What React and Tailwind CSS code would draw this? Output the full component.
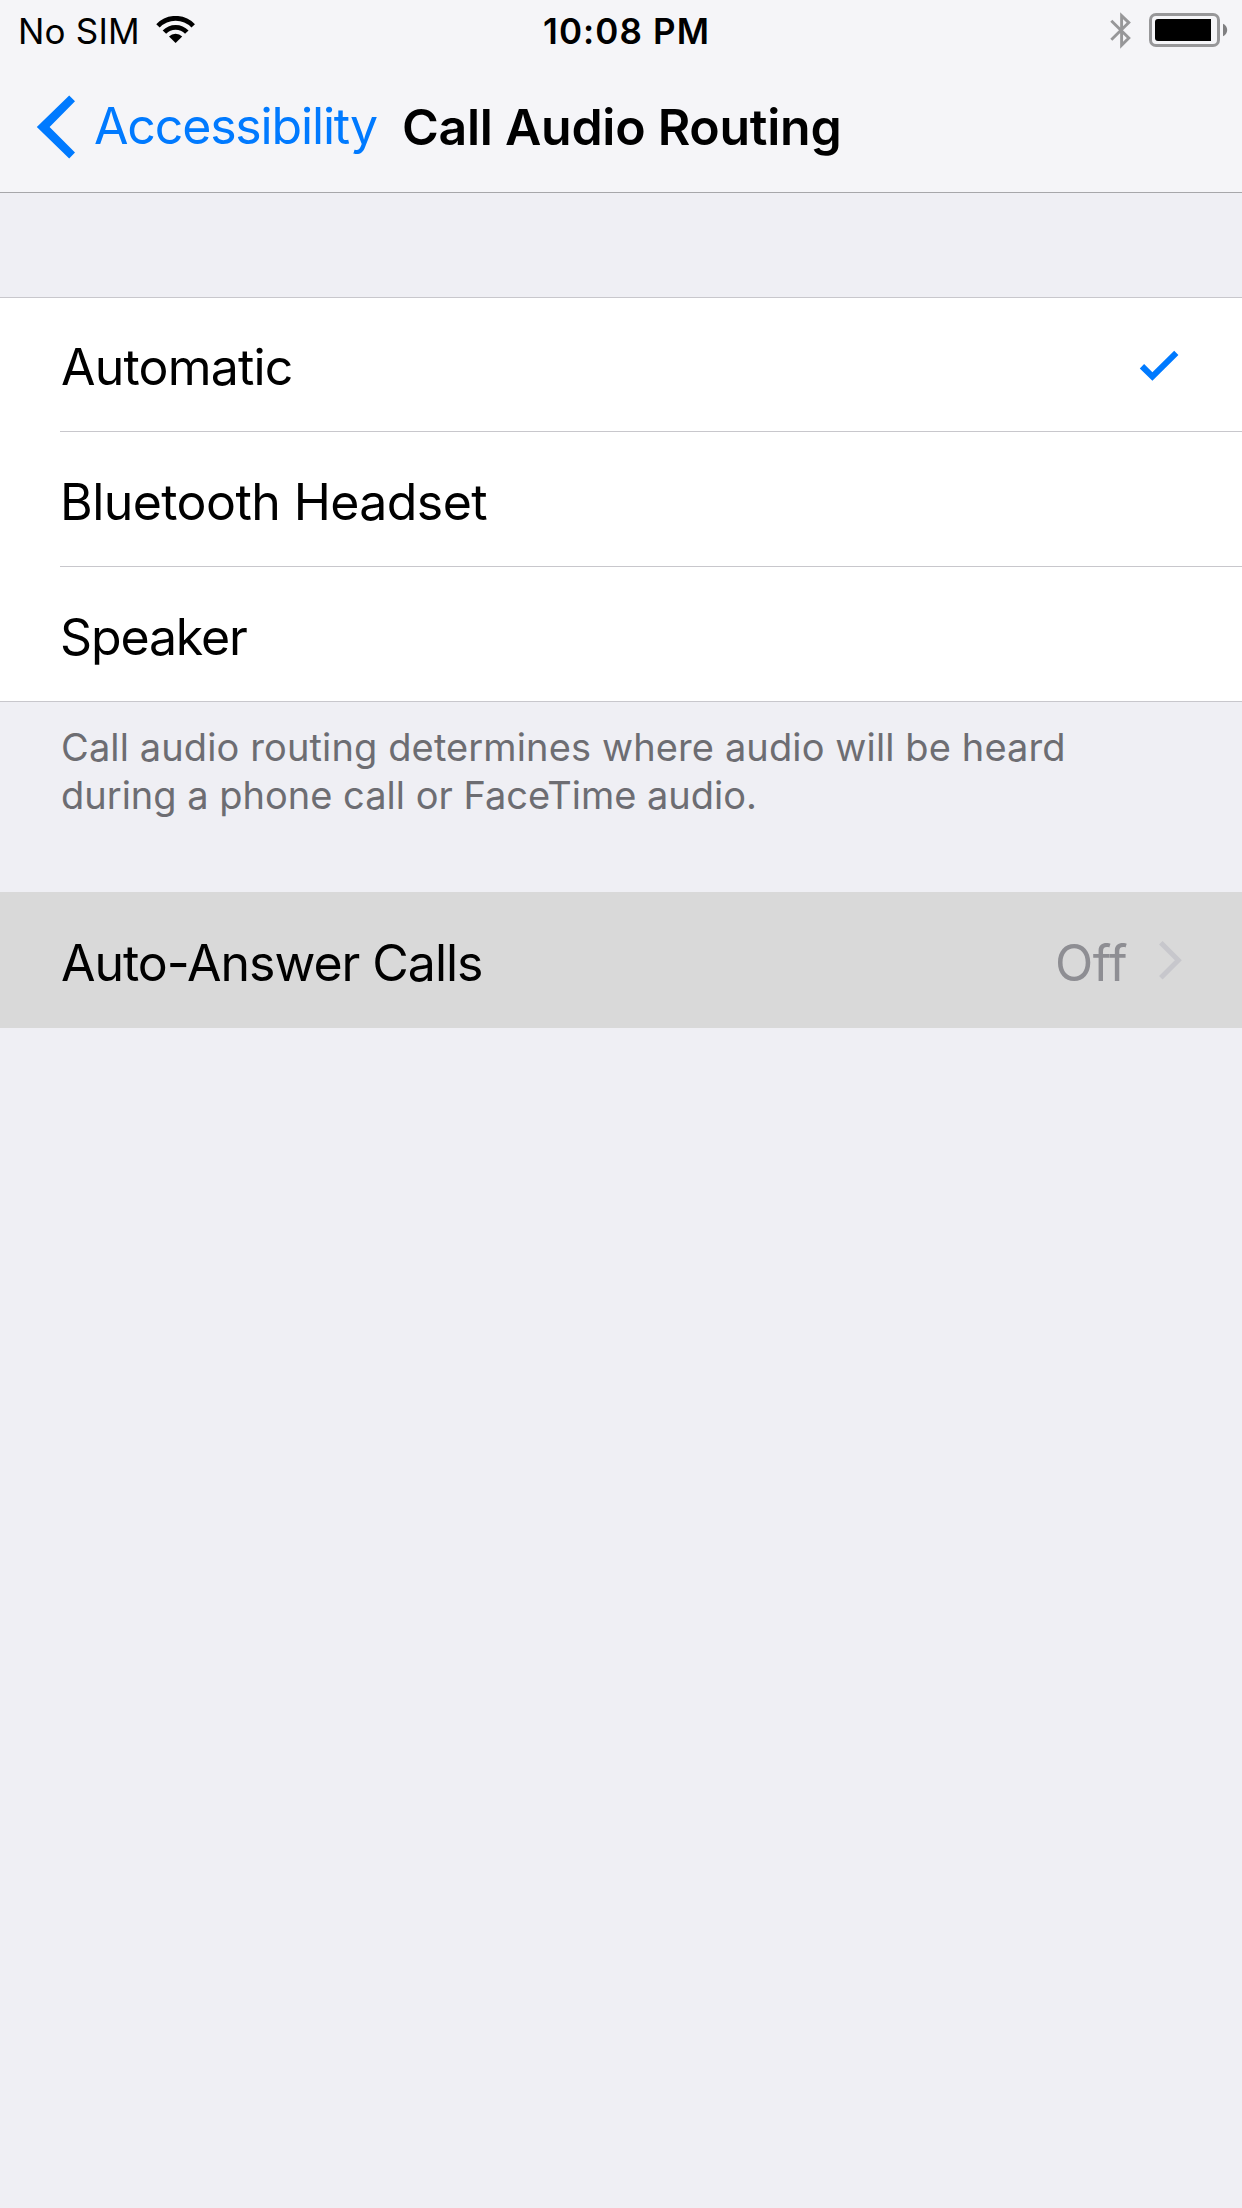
import React, { useState } from "react";

//opciones de la lista
const routes = [
  { name: "Automatic", tracking: "tracking-[-0.8px] pl-px" },
  { name: "Bluetooth Headset", tracking: "tracking-[-0.57px]" },
  { name: "Speaker", tracking: "tracking-[-1.15px]" },
];

//iconos
function WifiIcon() {
  return (
    <svg width="40" height="28" viewBox="0 0 40 28" fill="none" className="ml-4 mb-1">
      <path d="M2 9.8A24.4 24.4 0 0 1 37.2 9.8" stroke="#000" strokeWidth="4.8" />
      <path d="M8.4 16.2A15.4 15.4 0 0 1 30.8 16.2" stroke="#000" strokeWidth="4.8" />
      <path d="M19.6 27L13 20.4A9.3 9.3 0 0 1 26.2 20.4Z" fill="#000" />
    </svg>
  );
}

function BluetoothIcon() {
  return (
    <svg width="22" height="38" viewBox="0 0 22 38" fill="none" stroke="#979799" strokeWidth="2.9">
      <path d="M1.3 9.7L18.8 27L11.6 34.2V4.6L18.8 11.6L1.3 28.7" />
    </svg>
  );
}

function BatteryIcon() {
  return (
    <svg width="80" height="34" viewBox="0 0 80 34" fill="none">
      <rect x="1.5" y="1.5" width="68" height="31" rx="5.5" stroke="#979799" strokeWidth="3" />
      <path d="M9 6H62V28H9A3 3 0 0 1 6 25V9A3 3 0 0 1 9 6Z" fill="#000" />
      <path d="M74 10.8C76.5 12 78.2 14 78.2 17C78.2 20 76.5 22 74 23.2Z" fill="#7f7f81" />
    </svg>
  );
}

function BackIcon() {
  return (
    <svg width="40" height="64" viewBox="0 0 40 64" fill="#007aff" className="mt-px">
      <path d="M33.2 0.5L39 6.3L13.6 32L39 57.5L33.2 63.5L0.8 32Z" />
    </svg>
  );
}

function CheckIcon() {
  return (
    <svg width="40" height="32" viewBox="0 0 40 32" fill="#007aff" className="-mt-0.5">
      <path d="M0.8 18.4L5.1 14.1L13.4 22.3L35.2 0.7L39.4 4.9L13.4 30.8Z" />
    </svg>
  );
}

function ArrowIcon() {
  return (
    <svg width="24" height="40" viewBox="0 0 24 40" fill="none" className="-mt-1.5 ml-8">
      <path d="M1.8 2.8L19.3 20.3L1.8 37.8" stroke="#c7c7cc" strokeWidth="5" />
    </svg>
  );
}

export function CallAudioRouting() {
  const [selected, setSelected] = useState("Automatic");

  return (
    <div className="min-h-[2208px] w-[1242px] bg-[#efeff4] font-['Inter',sans-serif] text-black">
      <header className="border-b border-[#a7a7aa] bg-[#f5f5f8]">
        <div className="flex h-[60px] items-center pt-[3px] text-[35px] leading-none">
          <div className="flex w-[543px] items-center pl-[18px]">
            <span className="tracking-[0.19px]">No SIM</span>
            <WifiIcon />
          </div>
          <span className="font-[560] tracking-[1.1px]">10:08 PM</span>
          <div className="-mt-[3px] ml-auto flex items-center gap-[17px] pr-[13px]">
            <BluetoothIcon />
            <BatteryIcon />
          </div>
        </div>
        <div className="flex h-[132px] items-center pl-9 text-[50px] leading-none">
          <button className="flex items-center gap-[18px] text-[#007aff]">
            <BackIcon />
            <span className="tracking-[-1.16px]">Accessibility</span>
          </button>
          <h1 className="ml-[25px] pt-px font-[580] tracking-[-0.27px]">Call Audio Routing</h1>
        </div>
      </header>

      <main className="pt-[104px]">
        <ul className="border-y border-[#c8c7cc] bg-white pl-[60px] text-[50px] leading-none">
          {routes.map((route, index) => (
            <li
              key={route.name}
              onClick={() => setSelected(route.name)}
              className={`flex items-center justify-between pt-[5px] pr-[63px] ${index === 1 ? "h-[135px]" : "h-[134px]"} ${index < routes.length - 1 ? "border-b border-[#c8c7cc]" : ""}`}
            >
              <span className={route.tracking}>{route.name}</span>
              {selected === route.name && <CheckIcon />}
            </li>
          ))}
        </ul>
        <p className="px-[61px] pt-[21px] text-[38px] leading-[48px] text-[#6d6d72]">
          <span className="block tracking-[0.12px]">Call audio routing determines where audio will be heard</span>
          <span className="block">during a phone call or FaceTime audio.</span>
        </p>
        <div className="mt-[73px] flex h-[136px] items-center bg-[#d9d9d9] pt-1.5 pr-[59px] pl-[61px] text-[50px] leading-none">
          <span className="tracking-[-1.03px]">Auto-Answer Calls</span>
          <span className="ml-auto tracking-[-0.4px] text-[#8e8e93]">Off</span>
          <ArrowIcon />
        </div>
      </main>
    </div>
  );
}
export default CallAudioRouting;
